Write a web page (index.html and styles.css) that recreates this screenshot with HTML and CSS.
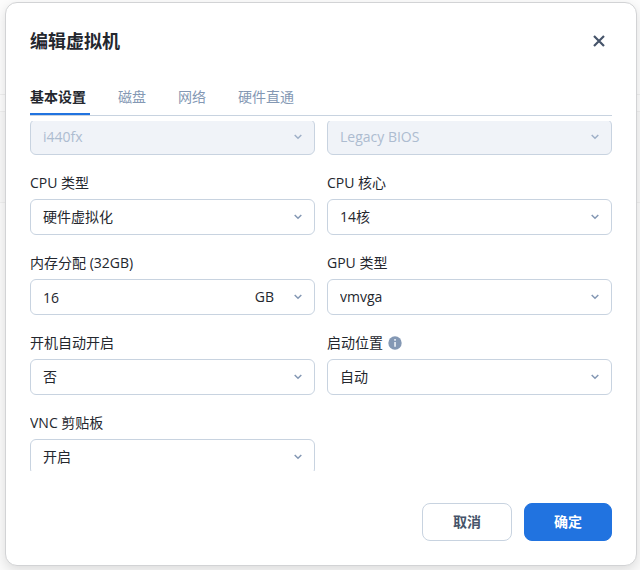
FILE: index.html
```html
<!DOCTYPE html>
<html lang="zh-CN">
<head>
<meta charset="utf-8">
<meta name="viewport" content="width=device-width, initial-scale=1">
<title>编辑虚拟机</title>
<link rel="stylesheet" href="styles.css">
</head>
<body>
<svg class="symbols" aria-hidden="true">
  <symbol id="chevron" viewBox="0 0 8 6"><path d="M.7 1 4 4.3 7.3 1" fill="none" stroke="currentColor" stroke-width="1.5"/></symbol>
</svg>
<main class="dialog" role="dialog" aria-labelledby="dialog-title">
  <header class="dialog-header">
    <h1 class="dialog-title" id="dialog-title">编辑虚拟机</h1>
    <button class="close" type="button" aria-label="关闭">
      <svg width="12" height="12" viewBox="0 0 12 12"><path d="M1 1 11 11M11 1 1 11" fill="none" stroke="currentColor" stroke-width="2.2"/></svg>
    </button>
  </header>
  <nav class="tabs">
    <a class="tab active" href="#basic">基本设置</a>
    <a class="tab" href="#disk">磁盘</a>
    <a class="tab" href="#network">网络</a>
    <a class="tab" href="#passthrough">硬件直通</a>
  </nav>
  <form class="form" id="vm-form">
    <div class="fields">
      <div class="field">
        <div class="control disabled">
          <select class="input" disabled aria-label="i440fx"><option>i440fx</option></select>
          <svg class="chevron"><use href="#chevron"/></svg>
        </div>
      </div>
      <div class="field">
        <div class="control disabled">
          <select class="input" disabled aria-label="BIOS"><option>Legacy BIOS</option></select>
          <svg class="chevron"><use href="#chevron"/></svg>
        </div>
      </div>
      <div class="field">
        <label class="label" for="cpu-type">CPU 类型</label>
        <div class="control">
          <select class="input" id="cpu-type"><option>硬件虚拟化</option></select>
          <svg class="chevron"><use href="#chevron"/></svg>
        </div>
      </div>
      <div class="field">
        <label class="label" for="cpu-cores">CPU 核心</label>
        <div class="control">
          <select class="input" id="cpu-cores"><option>14核</option></select>
          <svg class="chevron"><use href="#chevron"/></svg>
        </div>
      </div>
      <div class="field">
        <label class="label" for="memory">内存分配 (32GB)</label>
        <div class="control">
          <input class="input" id="memory" type="text" value="16">
          <span class="unit">GB</span>
          <svg class="chevron"><use href="#chevron"/></svg>
        </div>
      </div>
      <div class="field">
        <label class="label" for="gpu-type">GPU 类型</label>
        <div class="control">
          <select class="input" id="gpu-type"><option>vmvga</option></select>
          <svg class="chevron"><use href="#chevron"/></svg>
        </div>
      </div>
      <div class="field">
        <label class="label" for="autostart">开机自动开启</label>
        <div class="control">
          <select class="input" id="autostart"><option>否</option></select>
          <svg class="chevron"><use href="#chevron"/></svg>
        </div>
      </div>
      <div class="field">
        <label class="label" for="boot">启动位置
          <svg class="info" width="14" height="14" viewBox="0 0 14 14" aria-hidden="true"><circle cx="7" cy="7" r="6.7" fill="#8498b4"/><path d="M6.2 3h1.7v1.7H6.2zM6.2 6h1.7v4.8H6.2z" fill="#e6ebf2"/></svg>
        </label>
        <div class="control">
          <select class="input" id="boot"><option>自动</option></select>
          <svg class="chevron"><use href="#chevron"/></svg>
        </div>
      </div>
      <div class="field">
        <label class="label" for="clipboard">VNC 剪贴板</label>
        <div class="control">
          <select class="input" id="clipboard"><option>开启</option></select>
          <svg class="chevron"><use href="#chevron"/></svg>
        </div>
      </div>
    </div>
  </form>
  <footer class="actions">
    <button class="button" type="button">取消</button>
    <button class="button primary" type="submit" form="vm-form">确定</button>
  </footer>
</main>
</body>
</html>
```
FILE: styles.css
```css
* { box-sizing: border-box; }

body {
  margin: 0;
  height: 100vh;
  padding: 2px 3px 4px 5px;
  background: linear-gradient(#fcfcfc 0 94px, #efefef 94px 95px, #fcfcfc 95px 111px, #efefef 111px 112px, #f8f8f8 112px 202px, #efefef 202px 203px, #fafafa 203px);
  color: #24272e;
  font: 14px/20px "Open Sans", "Noto Sans CJK SC", sans-serif;
}

.symbols { position: absolute; width: 0; height: 0; }

.dialog {
  display: flex;
  flex-direction: column;
  height: 100%;
  padding: 24px;
  border: 1px solid #d2d3d5;
  border-radius: 12px;
  background: #fff;
  box-shadow: 0 4px 12px rgba(0, 0, 0, 0.12);
}

.dialog-header {
  display: flex;
  align-items: center;
  justify-content: space-between;
  height: 28px;
}

.dialog-title { margin: 0; font-size: 18px; line-height: 26px; font-weight: 700; }

.close {
  display: flex;
  align-items: center;
  justify-content: center;
  width: 26px;
  height: 28px;
  padding: 0;
  border: 0;
  background: none;
  color: #46546a;
}

.tabs {
  display: flex;
  flex: none;
  gap: 28px;
  margin-top: 32px;
  border-bottom: 1px solid #c8d3e0;
}

.tab {
  padding: 0 4px 6px 0;
  border-bottom: 2px solid transparent;
  color: #8498b4;
  text-decoration: none;
}

.tab.active { border-color: #2173e0; color: #24272e; font-weight: 700; }

.form { flex: 1; min-height: 0; margin-top: 5px; overflow: hidden; }

.fields {
  display: grid;
  grid-template-columns: 1fr 1fr;
  gap: 18px 12px;
  margin-top: -2px;
}

.field { display: flex; flex-direction: column; gap: 6px; min-width: 0; }

.label { display: flex; align-items: center; gap: 5px; }

.control {
  display: flex;
  align-items: center;
  height: 36px;
  padding-right: 12px;
  border: 1px solid #c8d3e0;
  border-radius: 6px;
  background: #fff;
}

.control.disabled { background: #f0f3f8; color: #adbcd0; }

.input {
  flex: 1;
  min-width: 0;
  height: 34px;
  padding: 0 0 0 12px;
  border: 0;
  outline: 0;
  appearance: none;
  background: none;
  color: inherit;
  font: inherit;
  opacity: 1;
}

.unit { margin-right: 20px; }

.chevron { flex: none; width: 8px; height: 6px; color: #8498b4; }

.disabled .chevron { color: #9fb0c8; }

.actions { display: flex; justify-content: flex-end; gap: 12px; margin-top: 32px; }

.button {
  height: 38px;
  min-width: 90px;
  border: 1px solid #c8d3e0;
  border-radius: 8px;
  background: #fff;
  color: #46546a;
  font: inherit;
  font-weight: 700;
}

.button.primary { min-width: 88px; border-color: #2173e0; background: #2173e0; color: #fff; }
```
